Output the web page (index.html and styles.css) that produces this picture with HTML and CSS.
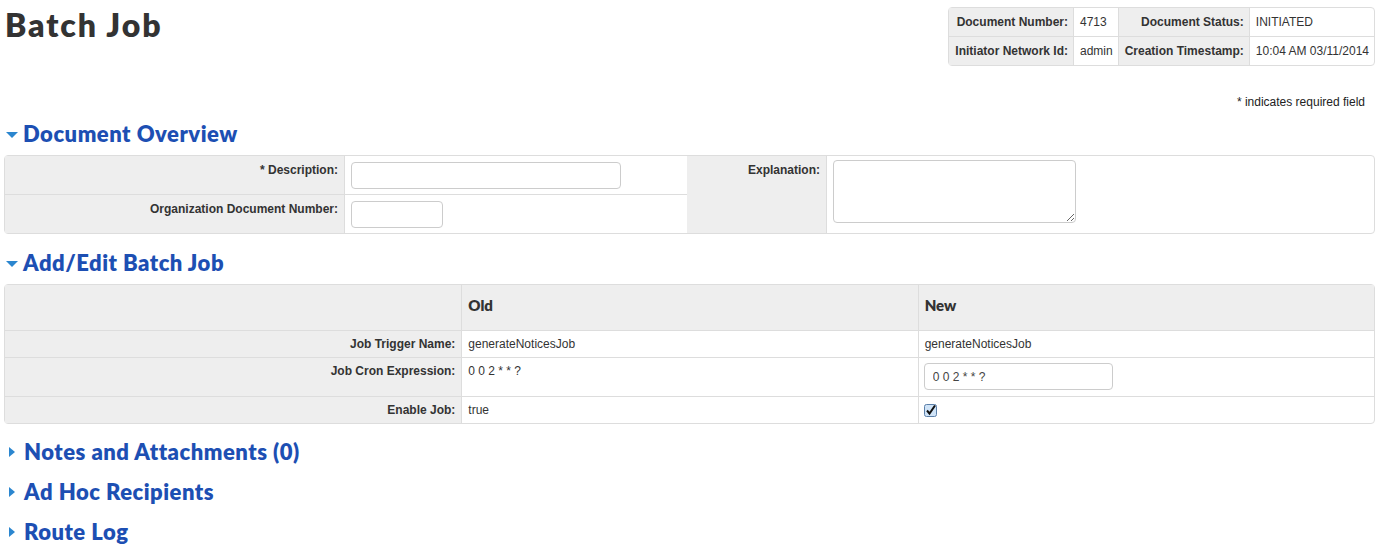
FILE: index.html
```html
<!DOCTYPE html>
<html lang="en">
<head>
    <meta charset="UTF-8">
    <title>Batch Job</title>
    <link rel="stylesheet" href="styles.css">
</head>
<body>

    <div class="page">
        <div class="top-bar">
            <h1 class="doc-title">Batch Job</h1>
            <table class="doc-header">
                <tr>
                    <th>Document Number:</th>
                    <td>4713</td>
                    <th>Document Status:</th>
                    <td>INITIATED</td>
                </tr>
                <tr>
                    <th>Initiator Network Id:</th>
                    <td>admin</td>
                    <th>Creation Timestamp:</th>
                    <td>10:04 AM 03/11/2014</td>
                </tr>
            </table>
        </div>

        <div class="required-note">* indicates required field</div>

        <h2 class="section-title"><span class="arrow-down"></span>Document Overview</h2>
        <table class="grid overview">
            <tr>
                <th class="col-label">* Description:</th>
                <td class="col-value"><input type="text" class="field field-long"></td>
                <th class="col-label2" rowspan="2">Explanation:</th>
                <td rowspan="2"><textarea class="field field-area"></textarea></td>
            </tr>
            <tr>
                <th class="col-label">Organization Document Number:</th>
                <td class="col-value"><input type="text" class="field field-short"></td>
            </tr>
        </table>

        <h2 class="section-title"><span class="arrow-down"></span>Add/Edit Batch Job</h2>
        <table class="grid maint">
            <tr class="head-row">
                <th class="blank"></th>
                <th class="col-head">Old</th>
                <th class="col-head">New</th>
            </tr>
            <tr>
                <th>Job Trigger Name:</th>
                <td>generateNoticesJob</td>
                <td>generateNoticesJob</td>
            </tr>
            <tr>
                <th>Job Cron Expression:</th>
                <td>0 0 2 * * ?</td>
                <td><input type="text" class="field field-cron" value="0 0 2 * * ?"></td>
            </tr>
            <tr>
                <th>Enable Job:</th>
                <td>true</td>
                <td>
                    <svg class="checkbox" width="13" height="13" viewBox="0 0 13 13">
                        <rect x="0.5" y="0.5" width="12" height="12" rx="2" fill="#cfe3f7" stroke="#5b7fa8"/>
                        <path d="M3 6.5 L5.5 9.5 L11 1.5" fill="none" stroke="#111" stroke-width="2"/>
                    </svg>
                </td>
            </tr>
        </table>

        <h2 class="section-title closed"><span class="arrow-right"></span>Notes and Attachments (0)</h2>
        <h2 class="section-title closed"><span class="arrow-right"></span>Ad Hoc Recipients</h2>
        <h2 class="section-title closed"><span class="arrow-right"></span>Route Log</h2>
    </div>

</body>
</html>
```

FILE: styles.css
```css
body {
    font-family: "Liberation Sans", Arial, sans-serif;
    font-size: 12px;
    color: #333;
    background-color: #ffffff;
    margin: 0;
}

.page {
    padding: 0 8px 0 4px;
}

.top-bar {
    display: flex;
    justify-content: space-between;
    align-items: flex-start;
    padding-top: 7px;
}

.doc-title {
    font-family: Lato, "Open Sans", sans-serif;
    font-weight: 800;
    font-size: 32px;
    letter-spacing: 1.9px;
    line-height: 34px;
    margin: 1px 0 0 1px;
    color: #333;
}

.doc-header {
    border-collapse: separate;
    border-spacing: 0;
    border: 1px solid #ddd;
    border-radius: 4px;
}

.doc-header th,
.doc-header td {
    padding: 6px 5px 5px 6px;
    line-height: 17px;
    white-space: nowrap;
}

.doc-header th {
    background-color: #eee;
    text-align: right;
    font-weight: bold;
}

.doc-header tr + tr th,
.doc-header tr + tr td {
    border-top: 1px solid #ddd;
}

.doc-header th + td,
.doc-header td + th {
    border-left: 1px solid #ddd;
}

.required-note {
    text-align: right;
    font-size: 12px;
    color: #222;
    line-height: 17px;
    margin: 28px 0 -2px 0;
    padding-right: 10px;
}

.section-title {
    font-family: Lato, "Open Sans", sans-serif;
    font-weight: 800;
    font-size: 22px;
    letter-spacing: 0.5px;
    line-height: 30px;
    color: #1d4fb3;
    margin: 10px 0 6px 0;
    display: flex;
    align-items: center;
}

.section-title.closed {
    margin-bottom: 0;
}

.grid + .section-title {
    margin-top: 14px;
}

.maint + .section-title {
    margin-top: 13px;
}

.arrow-down {
    width: 0;
    height: 0;
    border-left: 6px solid transparent;
    border-right: 6px solid transparent;
    border-top: 6px solid #2b86cf;
    margin: 2px 5px 0 2px;
}

.arrow-right {
    width: 0;
    height: 0;
    border-top: 5px solid transparent;
    border-bottom: 5px solid transparent;
    border-left: 6px solid #2b86cf;
    margin: 0 9px 0 5px;
}

.grid {
    width: 100%;
    border-collapse: separate;
    border-spacing: 0;
    border: 1px solid #ddd;
    border-radius: 4px;
}

.grid th,
.grid td {
    line-height: 17px;
    vertical-align: top;
    text-align: left;
}

.grid th {
    background-color: #eee;
    text-align: right;
    font-weight: bold;
}

.grid td,
.grid th + th {
    border-left: 1px solid #ddd;
}

.grid tr + tr th,
.grid tr + tr td {
    border-top: 1px solid #ddd;
}

.overview th,
.overview td {
    padding: 6px 6px 5px 6px;
}

.overview .col-label {
    width: 327px;
}

.overview .col-value {
    width: 330px;
}

.overview .col-label2 {
    width: 127px;
}

.overview td[rowspan] {
    padding-top: 4px;
}

.maint th,
.maint td {
    padding: 5px 6px 4px 6px;
}

.maint th {
    width: 32%;
}

.maint .head-row th {
    padding: 12px 6px 12px 6px;
    height: 21px;
}

.maint .col-head {
    font-family: Lato, "Open Sans", sans-serif;
    font-weight: 800;
    font-size: 15px;
    text-align: left;
    color: #333;
}

.maint .blank {
    border-left: none;
}

.field {
    font-family: "Liberation Sans", Arial, sans-serif;
    font-size: 12px;
    color: #444;
    border: 1px solid #ccc;
    border-radius: 4px;
    height: 27px;
    box-sizing: border-box;
    padding: 4px 8px;
    margin: 0;
    display: block;
    background: #fff;
}

.field-long {
    width: 270px;
}

.field-short {
    width: 92px;
}

.field-cron {
    width: 189px;
    margin: 0 0 2px -1px;
}

.field-area {
    width: 243px;
    height: 63px;
    resize: both;
}

.checkbox {
    display: block;
    margin: 2px 0 0 -1px;
}
```
